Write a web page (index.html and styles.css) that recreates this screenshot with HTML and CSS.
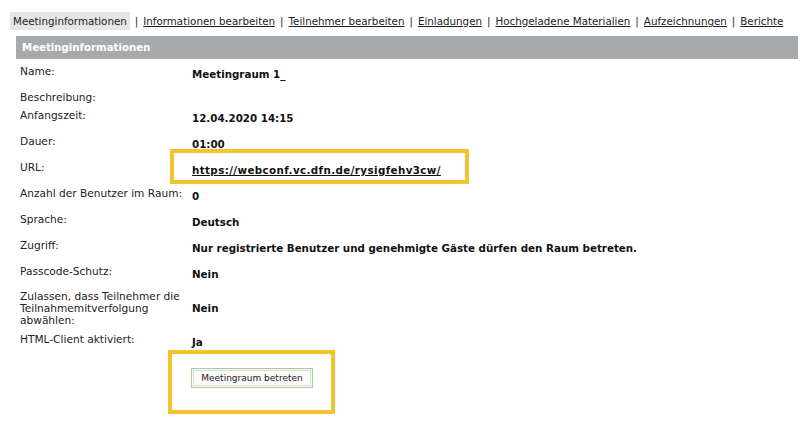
FILE: index.html
```html
<!DOCTYPE html>
<html lang="de">

<head>
    <meta charset="UTF-8">
    <title>Meetinginformationen</title>
    <link rel="stylesheet" href="styles.css">
</head>

<body>

    <!-- Tabs -->
    <div class="tabs">
        <span class="tab active">Meetinginformationen</span>
        <span class="sep">|</span>
        <a href="#">Informationen bearbeiten</a>
        <span class="sep">|</span>
        <a href="#">Teilnehmer bearbeiten</a>
        <span class="sep">|</span>
        <a href="#">Einladungen</a>
        <span class="sep">|</span>
        <a href="#">Hochgeladene Materialien</a>
        <span class="sep">|</span>
        <a href="#">Aufzeichnungen</a>
        <span class="sep">|</span>
        <a href="#">Berichte</a>
    </div>

    <div class="panel">
        <div class="panel-header">Meetinginformationen</div>

        <div class="info">
            <div class="row">
                <div class="label">Name:</div>
                <div class="value">Meetingraum 1_</div>
            </div>
            <div class="row short">
                <div class="label">Beschreibung:</div>
                <div class="value"></div>
            </div>
            <div class="row">
                <div class="label">Anfangszeit:</div>
                <div class="value">12.04.2020 14:15</div>
            </div>
            <div class="row">
                <div class="label">Dauer:</div>
                <div class="value">01:00</div>
            </div>
            <div class="row">
                <div class="label">URL:</div>
                <div class="value"><a class="url" href="#">https://webconf.vc.dfn.de/rysigfehv3cw/</a></div>
            </div>
            <div class="row">
                <div class="label">Anzahl der Benutzer im Raum:</div>
                <div class="value">0</div>
            </div>
            <div class="row">
                <div class="label">Sprache:</div>
                <div class="value">Deutsch</div>
            </div>
            <div class="row">
                <div class="label">Zugriff:</div>
                <div class="value">Nur registrierte Benutzer und genehmigte Gäste dürfen den Raum betreten.</div>
            </div>
            <div class="row">
                <div class="label">Passcode-Schutz:</div>
                <div class="value">Nein</div>
            </div>
            <div class="row multi">
                <div class="label">Zulassen, dass Teilnehmer die Teilnahmemitverfolgung abwählen:</div>
                <div class="value">Nein</div>
            </div>
            <div class="row">
                <div class="label">HTML-Client aktiviert:</div>
                <div class="value">Ja</div>
            </div>
        </div>

        <div class="actions">
            <button class="enter-btn">Meetingraum betreten</button>
        </div>
    </div>

    <!-- Highlight frames -->
    <div class="mark mark-url"></div>
    <div class="mark mark-btn"></div>

</body>

</html>
```

FILE: styles.css
```css
* {
    margin: 0;
    padding: 0;
    box-sizing: border-box;
}

body {
    font-family: 'DejaVu Sans', Verdana, sans-serif;
    font-size: 10.6px;
    color: #222;
    background-color: #fff;
    width: 800px;
    height: 434px;
    position: relative;
    overflow: hidden;
}

.tabs {
    display: flex;
    align-items: center;
    padding: 12px 0 0 10px;
    height: 30px;
    white-space: nowrap;
    font-size: 10.3px;
}

.tabs .tab {
    background-color: #e6e6e6;
    padding: 0 3px;
    line-height: 18px;
}

.tabs a {
    color: #222;
    text-decoration: underline;
}

.tabs .sep {
    padding: 0 5px;
}

.panel {
    margin: 6px 2px 0 16px;
}

.panel-header {
    background-color: #a7aaad;
    color: #fff;
    font-weight: bold;
    font-size: 10.2px;
    height: 23px;
    line-height: 23px;
    padding-left: 6px;
}

.info {
    padding: 5px 0 0 4px;
}

.row {
    display: flex;
    padding-bottom: 9px;
}

.row.short {
    padding-bottom: 4px;
}

.label {
    width: 172px;
    line-height: 14px;
}

.value {
    padding-top: 3px;
    line-height: 14px;
    font-weight: bold;
    font-size: 10.3px;
    color: #111;
}

.value a {
    color: #111;
    text-decoration: underline;
}

.value .url {
    letter-spacing: 0.4px;
}

.row.multi {
    padding-bottom: 6px;
}

.row.multi .label {
    line-height: 12px;
    width: 168px;
    margin-right: 4px;
}

.row.multi .value {
    align-self: center;
    padding-top: 0;
}

.actions {
    padding: 10px 0 0 175px;
}

.enter-btn {
    font-family: 'DejaVu Sans', Verdana, sans-serif;
    font-size: 9px;
    color: #222;
    width: 122px;
    height: 20px;
    background-color: #fafafa;
    border: 1px solid #a9c9a1;
    outline: 1px solid #d5e6d0;
    outline-offset: -3px;
    cursor: pointer;
}

/* yellow highlight frames over the screenshot */
.mark {
    position: absolute;
    border: 4px solid #f4c430;
}

.mark-url {
    left: 170px;
    top: 149px;
    width: 299px;
    height: 35px;
}

.mark-btn {
    left: 168px;
    top: 350px;
    width: 167px;
    height: 64px;
}
```
